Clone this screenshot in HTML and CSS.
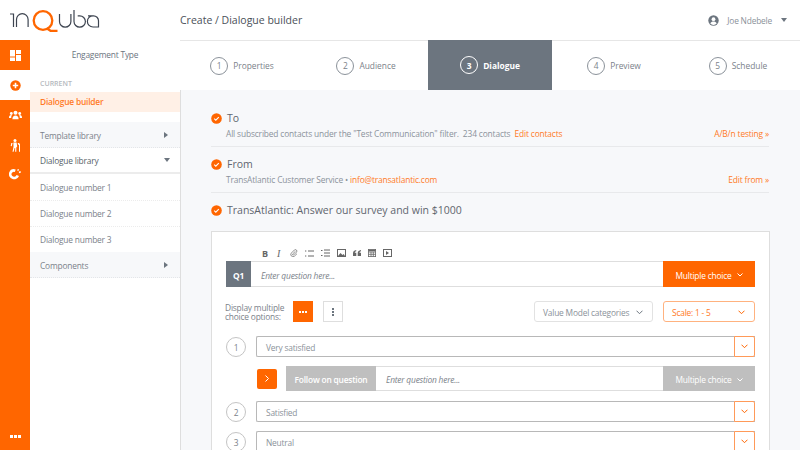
FILE: index.html
```html
<!DOCTYPE html>
<html lang="en">
<head>
<meta charset="utf-8">
<title>Dialogue builder</title>
<link rel="stylesheet" href="styles.css">
</head>
<body>
<header class="topbar">
  <div class="logo-cell">
    <svg class="logo" width="100" height="36" viewBox="0 0 100 36" fill="none" stroke="#3d4450" stroke-width="1.200">
      <path d="M10 14h3.500v13"/>
      <path d="M16.500 27v-7.500a5.800 5.800 0 0 1 11.600 0V27"/>
      <circle cx="43" cy="20.500" r="9.300" stroke="#ff6600" stroke-width="2.300"/>
      <path d="M47 28.500l3.500 2.300h7" stroke="#ff6600" stroke-width="2.300"/>
      <path d="M59.500 14v7.500a5.700 5.700 0 0 0 11.400 0V14"/>
      <path d="M74 10v11.500a5.700 5.700 0 1 0 5.700-5.700h-2"/>
      <path d="M88 15.800h5.500a5 5 0 0 1 5 5V27h-5.500a5.600 5.600 0 0 1 0-11.200"/>
    </svg>
  </div>
  <div class="crumb">Create / Dialogue builder</div>
  <div class="user">
    <svg width="11" height="11" viewBox="0 0 11 11"><circle cx="5.500" cy="5.500" r="5.200" fill="#6c757f"/><circle cx="5.500" cy="4.200" r="1.900" fill="#fff"/><path d="M2.300 8.500c.7-1.400 1.900-1.900 3.200-1.900s2.500.5 3.200 1.900a4.300 4.300 0 0 1-6.400 0z" fill="#fff"/></svg>
    <span class="user-name">Joe Ndebele</span>
    <span class="caret-down"></span>
  </div>
</header>
<div class="shell">
  <nav class="rail">
    <div class="rail-item">
      <svg width="11" height="11" viewBox="0 0 11 11" fill="#fff"><rect width="5" height="6.500"/><rect x="6" width="5" height="4"/><rect y="7.500" width="5" height="3.500"/><rect x="6" y="5" width="5" height="6"/></svg>
    </div>
    <div class="rail-item rail-active">
      <svg width="11" height="11" viewBox="0 0 11 11"><circle cx="5.500" cy="5.500" r="5.200" fill="#ff6600"/><path d="M5.500 2.800v5.400M2.800 5.500h5.400" stroke="#fff" stroke-width="1.600"/></svg>
    </div>
    <div class="rail-item">
      <svg width="13" height="10" viewBox="0 0 13 10" fill="#fff"><circle cx="6.500" cy="2.800" r="2"/><circle cx="2.300" cy="3.500" r="1.400"/><circle cx="10.700" cy="3.500" r="1.400"/><path d="M3.400 9.200c0-2.500 1.300-3.700 3.100-3.700s3.100 1.200 3.100 3.700z"/><path d="M0 7.500c0-1.500.8-2.500 2.200-2.500l.6.300C2.300 6 2.200 7 2.200 7.900H0zM13 7.500c0-1.500-.8-2.500-2.200-2.500l-.6.300c.5.700.6 1.700.6 2.600H13z"/></svg>
    </div>
    <div class="rail-item">
      <svg width="11" height="13" viewBox="0 0 11 13" fill="#fff"><circle cx="5" cy="1.600" r="1.500"/><path d="M3.400 3.500h3.200l.6 4-.9 1v4.300H5.200V9H4.600l-1 3.800H2.500l1-5z"/><path d="M2.600 4l-.9 3.300-1-.3.6-3zM7.700 4h1.100l1.200 1v7.800H9V6l-1-.4z"/></svg>
    </div>
    <div class="rail-item">
      <svg width="12" height="12" viewBox="0 0 12 12"><path d="M8 2.600a4 4 0 0 0-5.400 0 3.800 3.800 0 0 0 .2 5.500 3.900 3.900 0 0 0 5.400 0" fill="none" stroke="#fff" stroke-width="2.600" transform="rotate(-25 5 6)"/><path d="M8.500 1.500l1.200-1M10 3.500l1.700-.7" stroke="#fff" stroke-width="1.500"/></svg>
    </div>
    <div class="rail-more"><i></i><i></i><i></i></div>
  </nav>
  <aside class="sidebar">
    <div class="side-title">Engagement Type</div>
    <div class="side-label">CURRENT</div>
    <div class="side-current">Dialogue builder</div>
    <div class="side-row side-grey"><span>Template library</span><span class="caret-right"></span></div>
    <div class="side-row side-open"><span>Dialogue library</span><span class="caret-down"></span></div>
    <div class="side-row side-item">Dialogue number 1</div>
    <div class="side-row side-item">Dialogue number 2</div>
    <div class="side-row side-item side-last">Dialogue number 3</div>
    <div class="side-row side-grey"><span>Components</span><span class="caret-right"></span></div>
  </aside>
  <main class="main">
    <div class="steps">
      <div class="step"><span class="step-num">1</span>Properties</div>
      <div class="step"><span class="step-num">2</span>Audience</div>
      <div class="step step-active"><span class="step-num">3</span>Dialogue</div>
      <div class="step"><span class="step-num">4</span>Preview</div>
      <div class="step"><span class="step-num">5</span>Schedule</div>
    </div>
    <div class="content">
      <section class="block">
        <h2 class="block-head">
          <svg class="check" width="11" height="11" viewBox="0 0 11 11"><circle cx="5.500" cy="5.500" r="5.300" fill="#ff6600"/><path d="M3.200 5.700l1.600 1.500 3-3" fill="none" stroke="#fff" stroke-width="1.100"/></svg>
          To
        </h2>
        <div class="block-sub">
          <span>All subscribed contacts under the "Test Communication" filter. &nbsp;234 contacts &nbsp;<a class="link">Edit contacts</a></span>
          <a class="link">A/B/n testing »</a>
        </div>
      </section>
      <section class="block">
        <h2 class="block-head">
          <svg class="check" width="11" height="11" viewBox="0 0 11 11"><circle cx="5.500" cy="5.500" r="5.300" fill="#ff6600"/><path d="M3.200 5.700l1.600 1.500 3-3" fill="none" stroke="#fff" stroke-width="1.100"/></svg>
          From
        </h2>
        <div class="block-sub">
          <span>TransAtlantic Customer Service • <a class="link">info@transatlantic.com</a></span>
          <a class="link">Edit from »</a>
        </div>
      </section>
      <h2 class="block-head subject">
        <svg class="check" width="11" height="11" viewBox="0 0 11 11"><circle cx="5.500" cy="5.500" r="5.300" fill="#ff6600"/><path d="M3.200 5.700l1.600 1.500 3-3" fill="none" stroke="#fff" stroke-width="1.100"/></svg>
        TransAtlantic: Answer our survey and win $1000
      </h2>
      <div class="card">
        <div class="toolbar">
          <span class="tool-b">B</span>
          <span class="tool-i">I</span>
          <svg class="tool" width="8" height="8" viewBox="0 0 8 8" fill="none" stroke="#777" stroke-width=".8"><path d="M5.500 2.200L2.600 5a.7.700 0 0 0 1 1l3-3a1.500 1.500 0 0 0-2.100-2.100L1.300 4.100a2.200 2.200 0 0 0 3.100 3.100L7 4.700"/></svg>
          <svg class="tool" width="9" height="7" viewBox="0 0 9 7" stroke="#666"><path d="M0 1h1.300M0 6h1.300M3 1h6M3 6h6"/></svg>
          <svg class="tool" width="9" height="8" viewBox="0 0 9 8" stroke="#666"><path d="M0 1.500h1.500M0 6.500h1.500M3 1h6M3 4h6M3 7h6"/></svg>
          <svg class="tool" width="9" height="8" viewBox="0 0 9 8"><rect x=".5" y=".5" width="8" height="7" fill="#fff" stroke="#666"/><path d="M1 7l2.500-3 2 2 1.200-1L8 7z" fill="#666"/></svg>
          <svg class="tool" width="8" height="6" viewBox="0 0 8 6" fill="#666"><path d="M0 6V3.200C0 1.300 1.200.4 3.200 0v1.200C2.300 1.500 1.800 2 1.800 2.700h1.500V6zM4.700 6V3.200C4.700 1.300 5.900.4 8 0v1.200c-1 .3-1.500.8-1.500 1.500H8V6z"/></svg>
          <svg class="tool" width="8" height="8" viewBox="0 0 8 8" fill="none" stroke="#666" stroke-width=".8"><rect x=".4" y=".4" width="7.200" height="7.200"/><path d="M.4 3h7.200M.4 5.300h7.200M3 3v4.600M5.300 3v4.600"/><path d="M.4 1.500h7.200" stroke-width="1.600"/></svg>
          <svg class="tool" width="9" height="8" viewBox="0 0 9 8"><rect x=".5" y=".5" width="8" height="7" fill="none" stroke="#666"/><path d="M3 2l3 2-3 2z" fill="#666"/></svg>
        </div>
        <div class="q-row">
          <div class="q-tag">Q1</div>
          <div class="q-input">Enter question here...</div>
          <div class="q-type">Multiple choice
            <svg class="chev" width="6" height="4" viewBox="0 0 6 4" fill="none" stroke="currentColor"><path d="M.5.500L3 3 5.500.500"/></svg>
          </div>
        </div>
        <div class="display-row">
          <div class="display-label">Display multiple<br>choice options:</div>
          <div class="opt-btn opt-on"><i></i><i></i><i></i></div>
          <div class="opt-btn opt-off"><i></i><i></i><i></i></div>
          <div class="select select-plain">Value Model categories
            <svg width="7" height="5" viewBox="0 0 7 5" fill="none" stroke="#6c757f"><path d="M.5.700L3.500 3.700 6.500.700"/></svg>
          </div>
          <div class="select select-scale">Scale: 1 - 5
            <svg width="7" height="5" viewBox="0 0 7 5" fill="none" stroke="#ff6600"><path d="M.5.700L3.500 3.700 6.500.700"/></svg>
          </div>
        </div>
        <div class="answer">
          <span class="answer-num">1</span>
          <div class="answer-box"><span class="answer-text">Very satisfied</span><span class="answer-chev"><svg width="7" height="5" viewBox="0 0 7 5" fill="none" stroke="#ff6600"><path d="M.5.700L3.500 3.700 6.500.700"/></svg></span></div>
        </div>
        <div class="follow">
          <div class="follow-btn"><svg width="4" height="7" viewBox="0 0 4 7" fill="none" stroke="#fff"><path d="M.5.500l3 3-3 3"/></svg></div>
          <div class="follow-row">
            <div class="follow-label">Follow on question</div>
            <div class="q-input">Enter question here...</div>
            <div class="q-type q-type-off">Multiple choice
              <svg class="chev" width="6" height="4" viewBox="0 0 6 4" fill="none" stroke="currentColor"><path d="M.5.500L3 3 5.500.500"/></svg>
            </div>
          </div>
        </div>
        <div class="answer answer-after-follow">
          <span class="answer-num">2</span>
          <div class="answer-box"><span class="answer-text">Satisfied</span><span class="answer-chev"><svg width="7" height="5" viewBox="0 0 7 5" fill="none" stroke="#ff6600"><path d="M.5.700L3.500 3.700 6.500.700"/></svg></span></div>
        </div>
        <div class="answer answer-tight">
          <span class="answer-num">3</span>
          <div class="answer-box"><span class="answer-text">Neutral</span><span class="answer-chev"><svg width="7" height="5" viewBox="0 0 7 5" fill="none" stroke="#ff6600"><path d="M.5.700L3.500 3.700 6.500.700"/></svg></span></div>
        </div>
      </div>
    </div>
  </main>
</div>
</body>
</html>
```

FILE: styles.css
```css
* { box-sizing: border-box; }
html, body { margin: 0; height: 450px; overflow: hidden; }
body { font-family: "Open Sans", sans-serif; color: #6c757f; background: #fff; font-size: 8.400px; letter-spacing: -.2px; }
h2 { margin: 0; font-weight: 400; }

.topbar { display: flex; align-items: center; height: 40px; }
.logo-cell { width: 180px; height: 40px; flex: none; }
.logo { display: block; }
.crumb { flex: 1; font-size: 10.500px; color: #4a5059; letter-spacing: 0; }
.user { display: flex; align-items: center; padding-right: 13px; }
.user-name { margin: 0 9px 0 8px; color: #8b929a; }

.caret-down { width: 0; height: 0; border: 3px solid transparent; border-top: 4px solid #6c757f; border-bottom: 0; }
.caret-right { width: 0; height: 0; border: 3px solid transparent; border-left: 4px solid #6c757f; border-right: 0; }

.shell { display: flex; height: 410px; }
.rail { width: 30px; flex: none; background: #ff6600; display: flex; flex-direction: column; }
.rail-item { height: 30px; display: flex; align-items: center; justify-content: center; }
.rail-active { background: #fff; }
.rail-more { margin-top: auto; margin-bottom: 12px; display: flex; justify-content: center; gap: 1px; }
.rail-more i { width: 3px; height: 3px; background: #fff; }

.sidebar { width: 151px; flex: none; border-right: 1px solid #dedede; background: #fff; }
.side-title { height: 30px; padding-top: 8px; text-align: center; color: #6c757f; line-height: 14px; }
.side-label { height: 22px; padding: 7px 0 0 10px; font-size: 7px; font-weight: 600; color: #b5b9be; line-height: 14px; letter-spacing: 0; }
.side-current { height: 20px; line-height: 20px; padding-left: 10px; background: #fff0e6; color: #ff7a26; font-weight: 600; margin-bottom: 10px; }
.side-row { height: 26px; display: flex; align-items: center; justify-content: space-between; padding: 0 12px 0 10px; color: #7b828a; }
.side-grey { background: #f7f8fa; border-bottom: 1px dotted #e4e6e9; padding-top: 1px; }
.side-open { height: 24px; color: #585f69; background: #fff; box-shadow: 0 2px 0 #ececec; margin-bottom: 3px; padding-right: 10px; }
.side-item { border-bottom: 1px dotted #ececec; }
.side-last { border-bottom: 0; height: 25px; }

.main { flex: 1; min-width: 0; background: #f7f8fa; }
.steps { display: grid; grid-template-columns: repeat(5, 1fr); height: 50px; margin-left: -1px; background: #fff; }
.step { display: flex; align-items: center; justify-content: center; gap: 5px; color: #7b828a; letter-spacing: 0; border-top: 1px solid #e6e6e6; }
.step-num { width: 18px; height: 18px; border: 1px solid #8b929a; border-radius: 50%; display: flex; align-items: center; justify-content: center; }
.step-active { background: #6c757f; color: #fff; font-weight: 700; border-top: 0; }
.step-active .step-num { border-color: #fff; }

.content { padding: 21px 31px 0 30px; }
.block { border-bottom: 1px solid #e8e9eb; margin-bottom: 10px; padding-bottom: 5px; width: 558px; }
.block-head { display: flex; align-items: center; gap: 5px; height: 14px; font-size: 10.500px; color: #5f666f; line-height: 14px; letter-spacing: 0; }
.block-head .check { flex: none; }
.block-sub { display: flex; justify-content: space-between; padding-left: 15px; margin-top: 2px; height: 14px; line-height: 14px; color: #8b929a; letter-spacing: -.15px; }
.link { color: #ff7a26; }
.subject { margin-top: 1px; }

.card { margin-top: 14px; width: 559px; background: #fff; border: 1px solid #dedede; border-bottom: 0; padding: 0 14px; height: 240px; }
.toolbar { display: flex; align-items: center; height: 29px; padding: 13px 0 0 36px; }
.tool { display: block; flex: none; margin-right: 7px; }
.tool-b { width: 14px; font-weight: 700; color: #666; font-size: 9px; }
.tool-i { width: 14px; font-style: italic; font-family: "Liberation Serif", serif; color: #666; font-size: 10px; padding-left: 1px; }

.q-row { display: flex; height: 26px; border: 1px solid #dedede; background: #fff; }
.q-tag { width: 25px; margin: -1px 0 -1px -1px; padding-top: 2px; background: #6c757f; color: #fff; font-weight: 700; display: flex; align-items: center; justify-content: center; flex: none; }
.q-input { flex: 1; padding: 2px 0 0 10px; display: flex; align-items: center; font-style: italic; color: #7b828a; }
.q-type { width: 92px; margin: -1px -1px -1px 0; padding-top: 2px; background: #ff6600; color: #fff; display: flex; align-items: center; justify-content: center; gap: 5px; flex: none; }
.q-type-off { background: #bfbfbf; }

.display-row { display: flex; align-items: center; height: 21px; margin-top: 14px; }
.display-label { width: 68px; margin-left: -1px; line-height: 9px; color: #7b828a; flex: none; white-space: nowrap; }
.opt-btn { width: 20px; height: 21px; display: flex; align-items: center; justify-content: center; gap: 1px; flex: none; }
.opt-btn i { width: 2px; height: 2px; display: block; }
.opt-on { background: #ff6600; margin-right: 10px; }
.opt-on i { background: #fff; }
.opt-off { background: #fff; border: 1px solid #dedede; flex-direction: column; }
.opt-off i { background: #6c757f; }
.select { height: 21px; display: flex; align-items: center; justify-content: space-between; border-radius: 3px; padding: 2px 9px 0 8px; white-space: nowrap; flex: none; }
.select-plain { width: 119px; margin-left: auto; margin-right: 10px; border: 1px solid #e2e2e2; color: #8b929a; }
.select-scale { width: 92px; border: 1px solid #ffb27f; color: #ff7a26; }

.answer { display: flex; align-items: center; height: 21px; margin-top: 14px; }
.answer-after-follow { margin-top: 10px; }
.answer-tight { margin-top: 9px; }
.answer-num { width: 20px; height: 20px; padding-top: 2px; border: 1px solid #c4c4c4; border-radius: 50%; display: flex; align-items: center; justify-content: center; flex: none; margin-right: 10px; color: #7b828a; }
.answer-box { flex: 1; height: 21px; border: 1px solid #b8b8b8; border-width: 1px 0 1px 1px; border-radius: 2px 0 0 2px; display: flex; align-items: center; justify-content: space-between; background: #fff; }
.answer-text { padding: 2px 0 0 9px; color: #8b929a; }
.answer-chev { width: 21px; height: 21px; margin: -1px 0; border: 1px solid #ff9a59; border-radius: 0 2px 2px 0; display: flex; align-items: center; justify-content: center; background: #fff; }

.follow { display: flex; align-items: center; height: 25px; margin-top: 9px; }
.follow-btn { width: 20px; height: 20px; margin: 0 9px 0 31px; background: #ff6600; border-radius: 2px; display: flex; align-items: center; justify-content: center; flex: none; }
.follow-row { flex: 1; display: flex; height: 25px; border: 1px solid #dedede; }
.follow-label { width: 90px; margin: -1px 0 -1px -1px; padding-top: 2px; background: #bfbfbf; color: #fff; font-weight: 600; display: flex; align-items: center; justify-content: center; flex: none; }
```
